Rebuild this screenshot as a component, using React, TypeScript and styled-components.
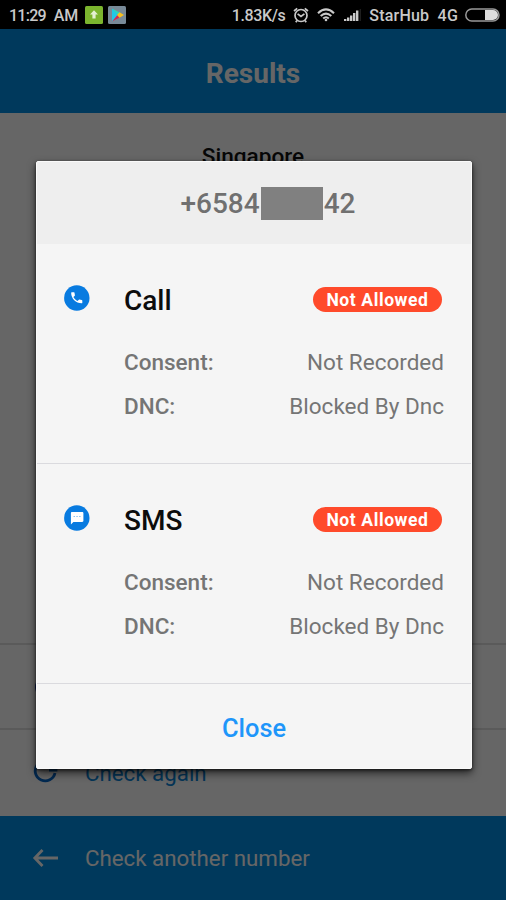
import React from "react";
import styled, { createGlobalStyle } from "styled-components";

const GlobalStyle = createGlobalStyle`
  * { box-sizing: border-box; }
  body { margin: 0; background: #000; font-family: Roboto, "Liberation Sans", sans-serif; }
`;

const Screen = styled.div`
  width: 506px;
  height: 900px;
  display: flex;
  flex-direction: column;
  overflow: hidden;
  position: relative;
`;

const StatusBar = styled.div`
  height: 29px;
  flex: none;
  background: #000;
  color: #c9c9c9;
  display: flex;
  align-items: center;
  justify-content: space-between;
  padding: 1px 6px 0 9px;
  font-size: 16px;
  font-weight: 500;
  white-space: pre;
`;

const StatusGroup = styled.div`
  display: flex;
  align-items: center;
`;

const StatusText = styled.span<{ $spacing?: number; $right?: number }>`
  letter-spacing: ${(p) => p.$spacing ?? 0}px;
  margin-right: ${(p) => p.$right ?? 0}px;
  line-height: 20px;
  padding-top: 2px;
`;

const StatusIcon = styled.svg<{ $right?: number }>`
  display: block;
  margin-right: ${(p) => p.$right ?? 0}px;
`;

const Page = styled.div`
  flex: 1;
  display: flex;
  flex-direction: column;
  background: #fff;
`;

const Header = styled.header`
  height: 84px;
  flex: none;
  display: flex;
  align-items: center;
  justify-content: center;
  padding-top: 4px;
  background: #0090e6;
  color: #fff;
  font-size: 28px;
  font-weight: 700;
`;

const Country = styled.div`
  flex: 1;
  padding-top: 30px;
  text-align: center;
  font-size: 22.6px;
  line-height: 28px;
  font-weight: 500;
  color: #111;
`;

const ActionRow = styled.div<{ $height: number; $primary?: boolean }>`
  height: ${(p) => p.$height}px;
  flex: none;
  display: flex;
  align-items: center;
  gap: 25px;
  padding-left: 32px;
  border-top: ${(p) => (p.$primary ? "none" : "2px solid #e2e2e2")};
  background: ${(p) => (p.$primary ? "#0090e6" : "#fff")};
  color: ${(p) => (p.$primary ? "#fff" : "#0a84d8")};
  font-size: 22.3px;
`;

const Scrim = styled.div`
  position: absolute;
  inset: 29px 0 0 0;
  display: flex;
  align-items: flex-start;
  justify-content: center;
  padding: 132px 0 0 2px;
  background: rgba(0, 0, 0, 0.6);
`;

const Dialog = styled.section`
  width: 436px;
  height: 608px;
  display: flex;
  flex-direction: column;
  background: #f5f5f5;
  border: 1px solid #fafafa;
  border-radius: 2px;
  box-shadow: 0 4px 9px rgba(0, 0, 0, 0.65), 0 1px 3px rgba(0, 0, 0, 0.6);
`;

const DialogTitle = styled.div`
  height: 82px;
  flex: none;
  display: flex;
  align-items: center;
  justify-content: center;
  padding-left: 28px;
  background: #eee;
  color: #707070;
  font-size: 28px;
  font-weight: 500;
`;

const Redaction = styled.span`
  width: 62px;
  height: 33px;
  margin: 0 1px;
  background: #808080;
`;

const Channel = styled.div`
  height: 220px;
  flex: none;
  display: grid;
  grid-template-columns: 60px 1fr auto;
  grid-template-rows: 32px auto;
  align-content: start;
  align-items: center;
  padding: 41px 27px 0;
  border-bottom: 1px solid #dadade;
`;

const Disc = styled.svg`
  display: block;
  margin-top: -6px;
`;

const ChannelName = styled.div`
  padding-bottom: 2px;
  color: #0c0c0c;
  font-size: 28px;
  font-weight: 500;
`;

const Badge = styled.div`
  width: 129px;
  height: 25px;
  margin: -3px 2px 0 0;
  display: flex;
  align-items: center;
  justify-content: center;
  border-radius: 13px;
  background: #ff4a2b;
  color: #fff;
  font-size: 17.5px;
  font-weight: 700;
  letter-spacing: 0.6px;
`;

const Fields = styled.div`
  grid-column: 2 / 4;
  padding-top: 23px;
`;

const Field = styled.div`
  height: 44px;
  display: flex;
  justify-content: space-between;
  align-items: center;
  color: #757575;
  font-size: 22.5px;
`;

const FieldName = styled.span`
  font-weight: 500;
`;

const FieldValue = styled.span`
  font-weight: 400;
`;

const CloseButton = styled.button`
  flex: 1;
  border: 0;
  padding: 3px 0 0;
  background: transparent;
  color: #1e96fa;
  font: 500 25.4px Roboto, sans-serif;
`;

const PhoneIcon = () => (
  <Disc width="26" height="26" viewBox="0 0 26 26">
    <circle cx="12.8" cy="13" r="12.7" fill="#087be0" />
    <path
      transform="translate(5.3 5.3) scale(0.62)"
      fill="#fff"
      d="M6.62 10.79c1.44 2.83 3.76 5.14 6.59 6.59l2.2-2.2c.27-.27.67-.36 1.02-.24 1.12.37 2.33.57 3.57.57.55 0 1 .45 1 1V20c0 .55-.45 1-1 1-9.39 0-17-7.61-17-17 0-.55.45-1 1-1h3.5c.55 0 1 .45 1 1 0 1.25.2 2.45.57 3.57.11.35.03.74-.25 1.02l-2.2 2.2z"
    />
  </Disc>
);

const MessageIcon = () => (
  <Disc width="26" height="26" viewBox="0 0 26 26">
    <circle cx="12.8" cy="13" r="12.7" fill="#087be0" />
    <path d="M8 7h10.2c.7 0 1.2.5 1.2 1.200v7.600c0 .7-.5 1.200-1.200 1.200H9.400L6.900 19.400V8.200C6.900 7.500 7.400 7 8 7z" fill="#fff" />
    <path d="M9.500 11.500h1.500m1.300 0h1.500m1.300 0h1.500" stroke="#8cc3f2" strokeWidth="1" />
  </Disc>
);

type ChannelData = { name: string; icon: React.ReactNode };

const channels: ChannelData[] = [
  { name: "Call", icon: <PhoneIcon /> },
  { name: "SMS", icon: <MessageIcon /> },
];

const Status = () => (
  <StatusBar>
    <StatusGroup>
      <StatusText $spacing={-0.75} $right={8}>11:29</StatusText>
      <StatusText $spacing={-0.3} $right={7.5}>AM</StatusText>
      <StatusIcon width="18" height="18" viewBox="0 0 18 18" $right={5}>
        <rect width="18" height="18" rx="1.500" fill="#7cb52e" />
        <path d="M9 4.200L13 8.600H10.600V12.400H7.400V8.600H5z" fill="#e4f0d2" />
      </StatusIcon>
      <StatusIcon width="18" height="18" viewBox="0 0 18 18">
        <rect width="18" height="18" rx="1.500" fill="#788a98" />
        <path d="M4 2.500v13l6.500-6.500z" fill="#20c8e8" />
        <path d="M4 2.500l8.500 4.500-2.600 2.600z" fill="#28d8c0" />
        <path d="M4 15.500l8.500-4.500-2.600-2.600z" fill="#d82850" />
        <path d="M11.500 6.200L16 9l-4.500 2.800L9 9z" fill="#f8c020" />
      </StatusIcon>
    </StatusGroup>
    <StatusGroup>
      <StatusText $spacing={-0.4} $right={8}>1.83K/s</StatusText>
      <StatusIcon width="16" height="17" viewBox="0 0 16 17" $right={8} fill="none" stroke="#c9c9c9" strokeWidth="1.700">
        <circle cx="8" cy="8.500" r="6" />
        <path d="M1 4L4.200 1.300M15 4L11.800 1.300M4.600 6.800L8 9.500L11.400 6.800M4 13.500l-1.200 1.800M12 13.500l1.200 1.800" />
      </StatusIcon>
      <StatusIcon width="18" height="14" viewBox="0 0 18 14" $right={9} fill="none" stroke="#c9c9c9" strokeWidth="2.100">
        <path d="M1 5.200Q9-2.300 17 5.200M3.700 8Q9 3.200 14.300 8M6.200 10.500Q9 8 11.800 10.500" />
        <circle cx="9" cy="12" r="1.300" fill="#c9c9c9" stroke="none" />
      </StatusIcon>
      <StatusIcon width="17" height="12" viewBox="0 0 17 12" $right={8}>
        <path d="M0 10h2.400v2H0zM3 8.500h2.400V12H3zM6 6.500h2.400V12H6zM9 4h2.400v8H9zM12 1.500h2.400V12H12z" fill="#c9c9c9" />
        <path d="M15.800 0h.8v12h-.8z" fill="#333" />
      </StatusIcon>
      <StatusText $spacing={0.2} $right={7}>StarHub  4G</StatusText>
      <StatusIcon width="35" height="14" viewBox="0 0 35 14">
        <rect x="0.800" y="1" width="33.200" height="12" rx="6" fill="none" stroke="#999" strokeWidth="1.500" />
        <path d="M20 2h8a5 5 0 0 1 0 10h-8z" fill="#ddd" />
      </StatusIcon>
    </StatusGroup>
  </StatusBar>
);

export default function App() {
  return (
    <>
      <GlobalStyle />
      <Screen>
        <Status />
        <Page>
          <Header>Results</Header>
          <Country>Singapore</Country>
          <ActionRow $height={85}>
            <svg width="28" height="28" viewBox="0 0 28 28">
              <circle cx="15" cy="14" r="12" fill="#1238a8" />
            </svg>
          </ActionRow>
          <ActionRow $height={88}>
            <svg width="28" height="28" viewBox="0 0 28 28" fill="none" stroke="#0766c8" strokeWidth="2.800">
              <path d="M20.500 5A10 10 0 1 0 23 14M24 2v9h-7" />
            </svg>
            Check again
          </ActionRow>
          <ActionRow $height={84} $primary>
            <svg width="28" height="20" viewBox="0 0 28 20" fill="none" stroke="#fff" strokeWidth="2.800">
              <path d="M26 10H3M10.500 2L2.800 10L10.500 18" />
            </svg>
            Check another number
          </ActionRow>
        </Page>
        <Scrim>
          <Dialog>
            <DialogTitle>
              +6584
              <Redaction />
              42
            </DialogTitle>
            {channels.map((c) => (
              <Channel key={c.name}>
                {c.icon}
                <ChannelName>{c.name}</ChannelName>
                <Badge>Not Allowed</Badge>
                <Fields>
                  <Field>
                    <FieldName>Consent:</FieldName>
                    <FieldValue>Not Recorded</FieldValue>
                  </Field>
                  <Field>
                    <FieldName>DNC:</FieldName>
                    <FieldValue>Blocked By Dnc</FieldValue>
                  </Field>
                </Fields>
              </Channel>
            ))}
            <CloseButton>Close</CloseButton>
          </Dialog>
        </Scrim>
      </Screen>
    </>
  );
}
